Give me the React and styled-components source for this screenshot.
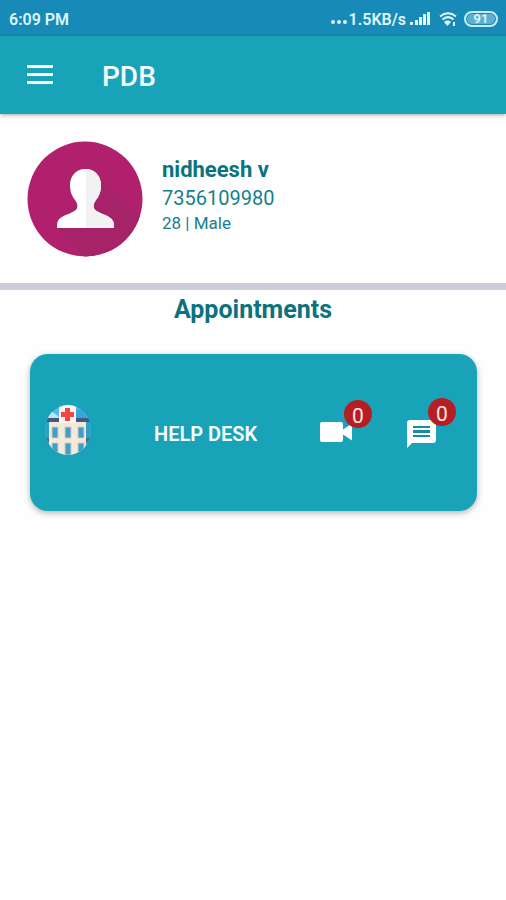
import React from "react";
import styled, { createGlobalStyle } from "styled-components";

const GlobalStyle = createGlobalStyle`
  * { box-sizing: border-box; }
  body {
    margin: 0;
    background: #fefefe;
    font-family: Roboto, "Liberation Sans", sans-serif;
  }
  h1, h2, h3, p { margin: 0; }
`;

const StatusBar = styled.div`
  display: flex;
  align-items: center;
  justify-content: space-between;
  height: 36px;
  padding: 2px 8px 0 9px;
  background: #188ab7;
  color: #dff6fc;
  font-size: 16px;
  font-weight: 600;
`;

const StatusGroup = styled.div`
  display: flex;
  align-items: center;
`;

const SignalIcon = styled.svg`
  margin: 0 9px 0 4px;
`;

const Battery = styled.span`
  display: flex;
  align-items: center;
  justify-content: center;
  width: 34px;
  height: 16px;
  margin-left: 7px;
  border: 2px solid #c9ecf7;
  border-radius: 8px;
  background: #5fafd0;
  background-clip: content-box;
  padding: 1px;
  font-size: 13px;
  line-height: 12px;
`;

const AppBar = styled.header`
  position: relative;
  display: flex;
  align-items: center;
  gap: 48px;
  height: 78px;
  padding: 0 26px;
  background: #19a3b8;
  color: #f4feff;
  box-shadow: 0 1px 4px rgba(0, 0, 0, 0.35);
`;

const Content = styled.main`
  padding-bottom: 30px;
`;

const IconButton = styled.button`
  position: relative;
  display: flex;
  padding: 0;
  border: 0;
  background: none;
  color: #ffffff;
  font-family: inherit;
  cursor: pointer;
`;

const AppTitle = styled.h1`
  padding-top: 4px;
  font-size: 28px;
  line-height: 32px;
  font-weight: 500;
`;

const Profile = styled.section`
  display: flex;
  align-items: flex-start;
  gap: 19px;
  padding: 27px 27px 26px;
  border-bottom: 7px solid #cdcddb;
`;

const ProfileText = styled.div`
  padding-top: 15px;
  color: #16818a;
`;

const Name = styled.h2`
  color: #0a737d;
  font-size: 22px;
  line-height: 28px;
  font-weight: 700;
`;

const Phone = styled.p`
  font-size: 20px;
  line-height: 28px;
`;

const Details = styled.p`
  font-size: 17px;
  line-height: 22px;
`;

const SectionTitle = styled.h2`
  padding: 4px 0 28px;
  color: #0a737d;
  font-size: 25px;
  line-height: 32px;
  font-weight: 700;
  text-align: center;
`;

const Card = styled.article`
  display: flex;
  align-items: center;
  height: 157px;
  margin: 0 29px 0 30px;
  padding: 0 41px 6px 14px;
  border-radius: 18px;
  background: #19a3b8;
  color: #f4feff;
  box-shadow: 0 2px 6px rgba(0, 0, 0, 0.3);
`;

const CardTitle = styled.h3`
  flex: 1;
  padding: 8px 0 0 62px;
  font-size: 20px;
  line-height: 24px;
  font-weight: 600;
`;

const Actions = styled.div`
  display: flex;
  align-items: center;
  gap: 55px;
  padding-top: 8px;
`;

const Badge = styled.span`
  position: absolute;
  top: -22px;
  right: -20px;
  width: 28px;
  height: 28px;
  border-radius: 50%;
  background: #b51f23;
  color: #fbe3e3;
  font-size: 21px;
  line-height: 32px;
  text-align: center;
`;

function Avatar() {
  return (
    <svg width="116" height="116" viewBox="0 0 116 116" role="img" aria-label="Profile picture">
      <defs>
        <clipPath id="avatarClip"><circle cx="58" cy="58" r="57.5" /></clipPath>
      </defs>
      <circle cx="58" cy="58" r="57.5" fill="#b0206d" />
      <path clipPath="url(#avatarClip)" d="M70 34 L122 84 V122 H64 L30 87 Z" fill="#a62269" />
      <path d="M58 28c-9 0-15 7-15 16 0 7 2 11 5 15 2 3 3 5 2 8-1 5-17 7-19 13-1 2-1 4-1 7h57c0-3 0-5-1-7-2-6-18-8-19-13-1-3 0-5 2-8 3-4 5-8 5-15 0-9-6-16-16-16z" fill="#ffffff" />
      <path d="M59 28c9 0 15 7 15 16 0 7-2 11-5 15-2 3-3 5-2 8 1 5 17 7 19 13 1 2 1 4 1 7H59z" fill="#f2f2f4" />
    </svg>
  );
}

function Hospital() {
  return (
    <svg width="48" height="50" viewBox="0 0 48 50" aria-hidden="true">
      <defs>
        <clipPath id="hospitalClip"><ellipse cx="24" cy="25" rx="23" ry="25" /></clipPath>
      </defs>
      <g clipPath="url(#hospitalClip)">
        <rect width="48" height="50" fill="#55b9ea" />
        <path d="M0 13l7-7 6 4 5 6H0z" fill="#b8e4f5" />
        <path d="M31 4l8 1 7 12H31z" fill="#3ba4df" />
        <path d="M0 17h6v33H0zM42 17h6v33h-6z" fill="#2ba3c6" />
        <path d="M0 33h48v4H0z" fill="#596783" />
        <path d="M5 17h37v33H5z" fill="#f4eadc" />
        <path d="M1 13h45v4H1z" fill="#46587b" />
        <path d="M15 0h17v18H15z" fill="#fbf4ed" />
        <path d="M21 3h5v4h4v5h-4v4h-5v-4h-4V7h4z" fill="#ed4548" />
        <g fill="#3e9fc8" stroke="#d4c9bd" strokeWidth="1">
          <path d="M8 22h6v11H8zM21 22h6v11h-6zM34 22h6v11h-6zM8 38h6v10H8zM21 38h6v12h-6zM34 38h6v10h-6z" />
        </g>
      </g>
    </svg>
  );
}

export default function App() {
  return (
    <>
      <GlobalStyle />
      <StatusBar>
        <span>6:09 PM</span>
        <StatusGroup>
          <svg width="20" height="16" viewBox="0 0 20 16" fill="currentColor" aria-hidden="true">
            <circle cx="4" cy="11" r="2" /><circle cx="10" cy="11" r="2" /><circle cx="16" cy="11" r="2" />
          </svg>
          <span>1.5KB/s</span>
          <SignalIcon width="20" height="16" viewBox="0 0 20 16" fill="currentColor" aria-hidden="true">
            <path d="M0 11h3v3H0zM5 9h3v5H5zM9 6h3v8H9zM13 3h3v11h-3zM17 1h3v13h-3z" />
          </SignalIcon>
          <svg width="18" height="16" viewBox="0 0 18 16" fill="none" stroke="currentColor" strokeWidth="2" aria-hidden="true">
            <path d="M1 5.500c5-4 11-4 16 0M3.500 8.500c3.500-3 7.500-3 11 0" />
            <path d="M5 11c2-2 5-2 7 0l-3.500 4z" fill="currentColor" stroke="none" />
            <path d="M15 11v4" />
          </svg>
          <Battery>91</Battery>
        </StatusGroup>
      </StatusBar>
      <AppBar>
        <IconButton type="button" aria-label="Open menu">
          <svg width="28" height="20" viewBox="0 0 28 20" fill="currentColor">
            <path d="M1 0h26v3H1zM1 8h26v3H1zM1 16h26v3H1z" />
          </svg>
        </IconButton>
        <AppTitle>PDB</AppTitle>
      </AppBar>
      <Content>
        <Profile>
          <Avatar />
          <ProfileText>
            <Name>nidheesh v</Name>
            <Phone>7356109980</Phone>
            <Details>28 | Male</Details>
          </ProfileText>
        </Profile>
        <SectionTitle>Appointments</SectionTitle>
        <Card>
          <Hospital />
          <CardTitle>HELP DESK</CardTitle>
          <Actions>
            <IconButton type="button" aria-label="Video calls, 0 new">
              <svg width="32" height="24" viewBox="0 0 32 24" fill="currentColor">
                <path d="M2 0h19a2 2 0 0 1 2 2v5.500l9-6v17l-9-6V18a2 2 0 0 1-2 2H2a2 2 0 0 1-2-2V2a2 2 0 0 1 2-2z" />
              </svg>
              <Badge>0</Badge>
            </IconButton>
            <IconButton type="button" aria-label="Messages, 0 new">
              <svg width="29" height="28" viewBox="0 0 29 28">
                <path d="M3 0h23a3 3 0 0 1 3 3v17a3 3 0 0 1-3 3H5l-5 5V3a3 3 0 0 1 3-3z" fill="#ffffff" />
                <path d="M6 6h17v2H6zM6 10h17v3H6zM6 15h17v2H6z" fill="#168da0" />
              </svg>
              <Badge>0</Badge>
            </IconButton>
          </Actions>
        </Card>
      </Content>
    </>
  );
}
